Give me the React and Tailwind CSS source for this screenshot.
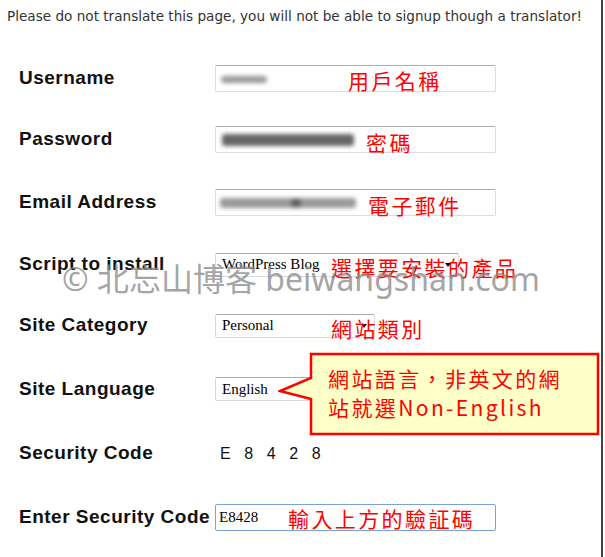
import React from "react";

const RED = "absolute left-0 top-1/2 -translate-y-1/2 whitespace-nowrap text-[21px] leading-none tracking-[2.4px] text-[#ff0000] [font-family:'Noto_Sans_CJK_TC','Noto_Sans_CJK_SC',sans-serif]";

function TextBox({ focused, children }) {
  return (
    <div
      className={
        focused
          ? "relative h-[27px] w-[281px] rounded-[2px] border border-[#7da2ce] bg-white"
          : "relative h-[27px] w-[281px] rounded-[2px] border border-[#dcdde4] border-t-[#abadb3] bg-white"
      }
    >
      {children}
    </div>
  );
}

function SelectBox({ width, children }) {
  return (
    <div
      className="relative flex h-[24px] items-center rounded-[2px] border border-[#d8d8de] border-t-[#a9a9b0] bg-white pl-[6px] text-[15px] text-black [font-family:'Liberation_Serif',serif]"
      style={{ width }}
    >
      {children}
      <div className="absolute right-[7px] top-[9px] h-0 w-0 border-x-[3px] border-t-[4px] border-x-transparent border-t-black" />
    </div>
  );
}

function Row({ h, label, children }) {
  return (
    <div className="flex items-center" style={{ height: h }}>
      <div className="w-[196px] shrink-0 whitespace-nowrap text-[19px] font-bold tracking-[0.5px] text-[#111] [font-family:'Liberation_Sans',Arial,sans-serif]">
        {label}
      </div>
      <div className="relative">{children}</div>
    </div>
  );
}

export default function App() {
  return (
    <div className="relative h-[557px] w-[603px] overflow-hidden border-r-2 border-[#444] bg-white">
      <div className="h-[48px] whitespace-nowrap pl-[7px] pt-[8px] text-[13.6px] leading-[16px] text-[#333] [font-family:'DejaVu_Sans',Tahoma,sans-serif]">
        Please do not translate this page, you will not be able to signup though a translator!
      </div>

      <div className="flex flex-col pl-[19px]">
        <Row h={60} label="Username">
          <TextBox>
            <div className="absolute left-[5px] top-[10px] h-[7px] w-[46px] rounded-full bg-[#9a9a9a] blur-[2px]" />
            <span className={RED + " mt-[2px] ml-[132px]"}>用戶名稱</span>
          </TextBox>
        </Row>
        <Row h={63} label="Password">
          <TextBox>
            <div className="absolute left-[6px] top-[7px] h-[12px] w-[132px] rounded-[3px] bg-[#666] blur-[2px]" />
            <span className={RED + " mt-[2px] ml-[150px]"}>密碼</span>
          </TextBox>
        </Row>
        <Row h={63} label="Email Address">
          <TextBox>
            <div className="absolute left-[4px] top-[8px] h-[10px] w-[136px] rounded-[3px] bg-[#999] blur-[2px]" />
            <div className="absolute left-[75px] top-[10px] h-[6px] w-[10px] rounded-full bg-[#555] blur-[2px]" />
            <span className={RED + " mt-[2px] ml-[152px]"}>電子郵件</span>
          </TextBox>
        </Row>
        <Row h={61} label="Script to install">
          <SelectBox width={244}>WordPress Blog</SelectBox>
          <span className={RED + " mt-[2px] ml-[116px]"}>選擇要安裝的產品</span>
        </Row>
        <Row h={61} label="Site Category">
          <SelectBox width={160}>Personal</SelectBox>
          <span className={RED + " mt-[2px] ml-[116px]"}>網站類別</span>
        </Row>
        <Row h={66} label="Site Language">
          <SelectBox width={160}>English</SelectBox>
        </Row>
        <Row h={63} label="Security Code">
          <div className="pl-[5px] text-[16px] tracking-[13.6px] text-[#111] [font-family:'Liberation_Sans',Arial,sans-serif]">
            E8428
          </div>
        </Row>
        <Row h={64} label="Enter Security Code">
          <TextBox focused>
            <span className="absolute left-[3px] top-1/2 -translate-y-1/2 text-[15px] leading-none text-black [font-family:'Liberation_Serif',serif]">
              E8428
            </span>
            <span className={RED + " mt-[1px] ml-[72px]"}>輸入上方的驗証碼</span>
          </TextBox>
        </Row>
      </div>

      {/* callout */}
      <svg
        className="absolute left-[278px] top-[351px]"
        width="324"
        height="88"
        viewBox="0 0 324 88"
      >
        <path
          d="M33 3 H320 V83 H33 V48 L2 40 L33 27 Z"
          fill="#ffffc8"
          stroke="#ff0000"
          strokeWidth="2.5"
          strokeLinejoin="miter"
        />
      </svg>
      <div className="absolute left-[328px] top-[364px] whitespace-nowrap text-[21px] leading-[29px] tracking-[2.4px] text-[#ff0000] [font-family:'Noto_Sans_CJK_TC','Noto_Sans_CJK_SC',sans-serif]">
        網站語言，非英文的網
        <br />
        站就選Non-English
      </div>

      {/* watermark */}
      <div className="pointer-events-none absolute left-[62px] top-[263px] whitespace-nowrap text-[32px] leading-none text-[rgba(140,140,140,0.8)] [font-family:'Noto_Sans','Noto_Sans_CJK_SC',sans-serif]">
        © 北忘山博客 beiwangshan.com
      </div>
    </div>
  );
}
